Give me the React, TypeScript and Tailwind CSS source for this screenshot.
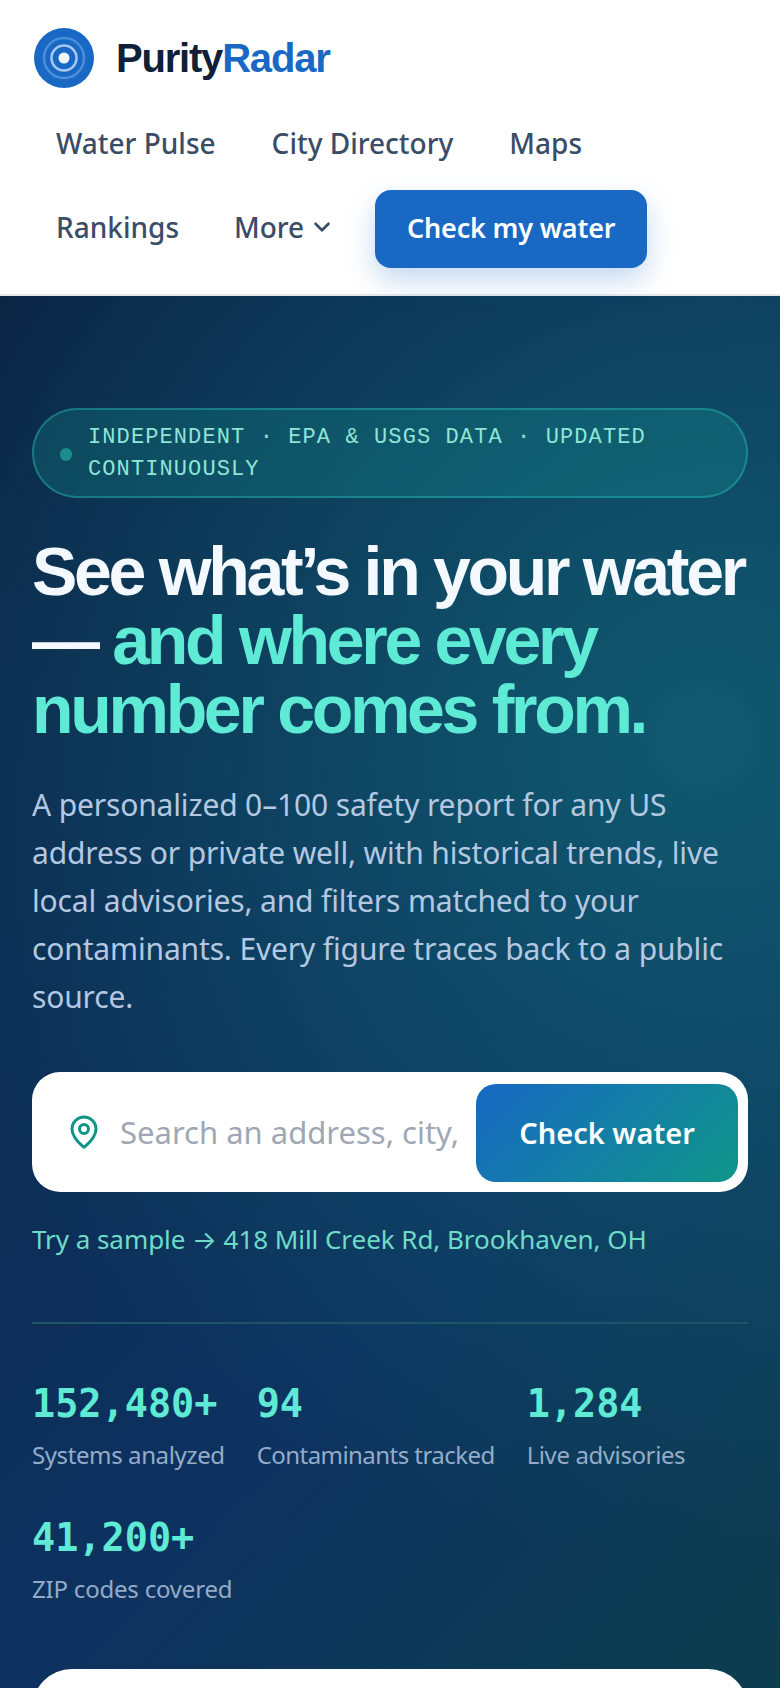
import { ChevronDown } from "lucide-react";

const stats = [
  { value: "152,480+", label: "Systems analyzed", tracking: "tracking-[-0.4px]" },
  { value: "94", label: "Contaminants tracked", tracking: "tracking-[-0.55px]" },
  { value: "1,284", label: "Live advisories", tracking: "tracking-[-0.4px]" },
  { value: "41,200+", label: "ZIP codes covered", tracking: "tracking-[-0.2px]" },
];

const bodyFont = "font-['Noto_Sans',sans-serif]";
const headFont = "font-['Liberation_Sans',sans-serif]";
const monoFont = "font-['Liberation_Mono',monospace]";

function Logo() {
  return (
    <svg width="60" height="60" viewBox="0 0 60 60" fill="none">
      <circle cx="30" cy="30" r="30" fill="#1868c4" />
      <circle cx="30" cy="30" r="20" stroke="#4b8fdc" strokeWidth="2.5" />
      <circle cx="30" cy="30" r="12.5" stroke="#a9c9f2" strokeWidth="2.5" />
      <circle cx="30" cy="30" r="5.5" fill="#eff6ff" />
    </svg>
  );
}

function Header() {
  return (
    <header className="border-b-2 border-[#e5e9ee] bg-white pb-[25px] pl-[34px] pr-8 pt-7">
      <div className="flex items-center gap-[22px]">
        <Logo />
        <div className={`${headFont} text-[40px] font-bold leading-[60px] tracking-[-1.2px] text-[#0f2138]`}>
          Purity<span className="text-[#1868c4]">Radar</span>
        </div>
      </div>
      <nav className={`${bodyFont} -ml-[2px] mt-[13px] flex flex-wrap items-center text-[28px] font-medium text-[#3b4c66]`}>
        <a className="px-6 py-[18px] leading-[48px]">Water Pulse</a>
        <a className="ml-2 px-6 py-[18px] leading-[48px]">City Directory</a>
        <a className="ml-2 px-6 py-[18px] leading-[48px]">Maps</a>
        <div className="flex w-full items-center">
          <a className="px-6 py-[18px] leading-[48px]">Rankings</a>
          <a className="ml-[7px] flex items-center gap-[5px] pl-6 leading-[48px]">
            More <ChevronDown size={26} strokeWidth={2.4} />
          </a>
          <button className="ml-[40px] mt-[3px] h-[78px] w-[272px] rounded-2xl bg-[#1868c4] text-[27px] font-semibold tracking-[-0.2px] text-white shadow-[0_12px_28px_rgba(24,104,196,0.25)]">
            Check my water
          </button>
        </div>
      </nav>
    </header>
  );
}

function Hero() {
  return (
    <section className="bg-[radial-gradient(circle_at_90%_28%,rgba(16,92,112,0.95),rgba(16,92,112,0)_62%),linear-gradient(135deg,#0b2545_0%,#0d3260_60%,#0c4049_100%)] px-8 pt-[112px]">
      <div className={`${monoFont} flex items-center gap-[16px] rounded-full border-2 border-[rgba(45,212,191,0.35)] bg-[rgba(20,184,166,0.2)] pb-[10px] pl-[26px] pr-8 pt-[12px] text-[22px] leading-8 tracking-[1.1px] text-[#8fe5d6]`}>
        <span className="h-[13px] w-3 shrink-0 rounded-full bg-[#1a8d8c]" />
        <span>INDEPENDENT · EPA &amp; USGS DATA · UPDATED CONTINUOUSLY</span>
      </div>
      <h1 className={`${headFont} mt-[39px] text-[68px] font-bold leading-[69px] tracking-[-3.3px] text-[#f4f8ff]`}>
        See what’s in your water — <span className="text-[#5eead4]">and where every number comes from.</span>
      </h1>
      <p className={`${bodyFont} mt-[37px] text-[30px] leading-[48px] tracking-[-0.15px] text-[#b4c8e2]`}>
        A personalized 0–100 safety report for any US address or private well, with historical trends, live local advisories, and filters matched to your contaminants. Every figure traces back to a public source.
      </p>
      <div className="mt-[51px] flex h-[120px] items-center rounded-[28px] bg-white py-[11px] pl-3 pr-[10px]">
        <svg className="ml-[22px] shrink-0" width="36" height="36" viewBox="0 0 24 24" fill="none" stroke="#0f9688" strokeWidth="2" strokeLinecap="round" strokeLinejoin="round">
          <path d="M20 10c0 4.993-5.539 10.193-7.399 11.799a1 1 0 0 1-1.202 0C9.539 20.193 4 14.993 4 10a8 8 0 0 1 16 0" />
          <circle cx="12" cy="10" r="3" />
        </svg>
        <input
          readOnly
          placeholder="Search an address, city, ZIP"
          className={`${bodyFont} ml-[18px] min-w-0 flex-1 bg-transparent text-[31px] outline-none placeholder:text-[#a0a7b4]`}
        />
        <button className={`${bodyFont} ml-[14px] mt-[2px] h-[98px] w-[262px] shrink-0 rounded-[20px] bg-[linear-gradient(135deg,#1868c4,#0f9688)] text-[29px] font-semibold text-white`}>
          Check water
        </button>
      </div>
      <p className={`${bodyFont} mt-[26px] text-[26px] leading-[42px] tracking-[-0.05px] text-[#6fdcc8]`}>
        Try a sample <span className="font-['Inter',sans-serif]">→</span> 418 Mill Creek Rd, Brookhaven, OH
      </p>
      <div className="mt-[61px] border-t-2 border-[#1e5468] pt-[53px]">
        <div className="flex flex-wrap gap-x-8 gap-y-[38px]">
          {stats.map((stat) => (
            <div key={stat.value}>
              <div className="font-['DejaVu_Sans_Mono',monospace] text-[38.5px] font-bold leading-[54px] text-[#5eead4]">{stat.value}</div>
              <div className={`${bodyFont} ${stat.tracking} mt-[6px] text-[24px] leading-[36px] text-[#94acc9]`}>{stat.label}</div>
            </div>
          ))}
        </div>
      </div>
      <div className="mt-[62px] h-[200px] rounded-t-[40px] bg-white" />
    </section>
  );
}

export default function App() {
  return (
    <div className="h-[1688px] overflow-hidden bg-white">
      <Header />
      <Hero />
    </div>
  );
}
